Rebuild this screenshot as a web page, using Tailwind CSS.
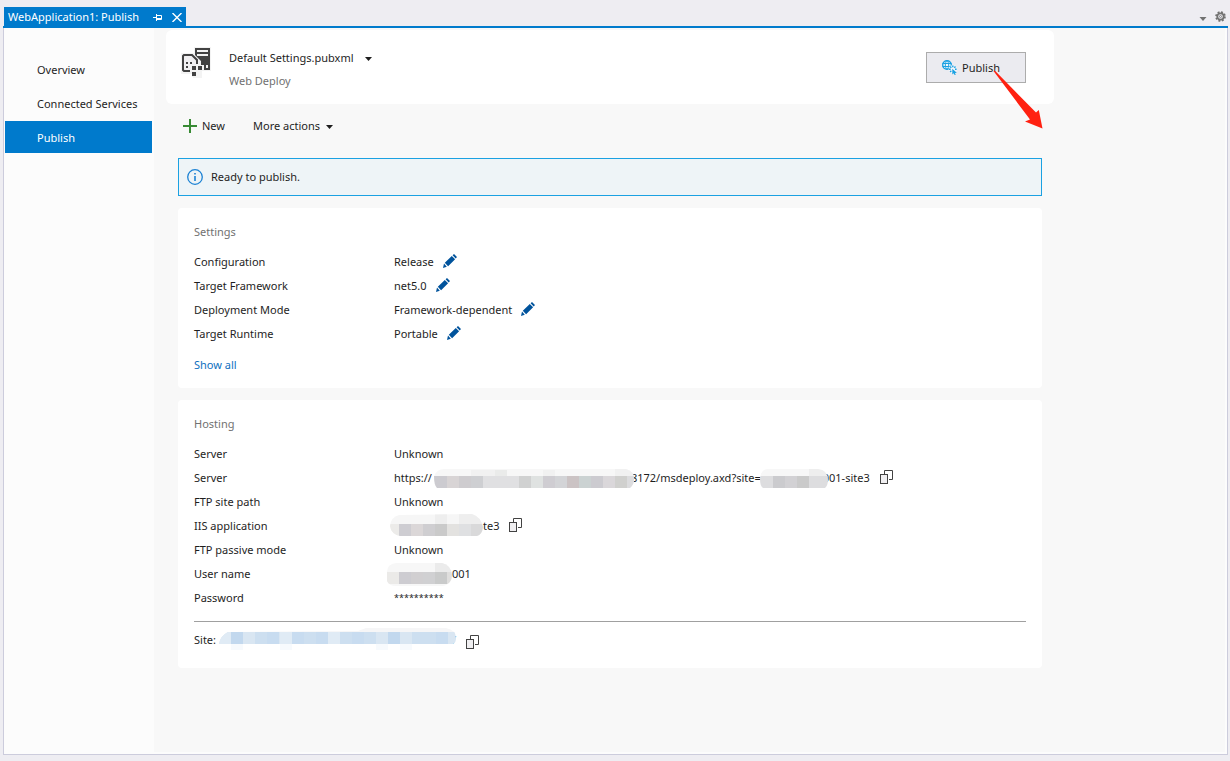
<!DOCTYPE html>
<html lang="en">
<head>
  <meta charset="UTF-8" />
  <meta name="viewport" content="width=device-width, initial-scale=1.0" />
  <title>WebApplication1: Publish</title>
  <script src="https://cdn.jsdelivr.net/npm/@tailwindcss/browser@4"></script>
</head>
<body class="flex min-h-screen flex-col bg-[#eeedf2] pt-[7px] pr-0.5 pb-1.5 pl-[3px] font-['Noto_Sans','Open_Sans',sans-serif] text-[11px] leading-4 text-[#1e1e1e]">

  <!-- shared icons -->
  <svg class="hidden">
    <symbol id="pencil" viewBox="0 0 14 14">
      <path fill="#00539c" d="M0 14l1-4.500L3.800 12.800zM1.800 8.800L8.800 2l3.300 3.300-7 6.900zM9.600 1.300L11 0l3 3-1.300 1.500z" />
    </symbol>
    <symbol id="copy" viewBox="0 0 13 14">
      <path fill="none" stroke="#424242" d="M4.500 4V.5h8v9H9" />
      <rect x=".5" y="4.500" width="7" height="9" fill="#f0eff1" stroke="#424242" />
    </symbol>
    <symbol id="caret" viewBox="0 0 7 4">
      <path fill="currentColor" d="M0 0h7L3.500 4z" />
    </symbol>
  </svg>

  <!-- document tab strip -->
  <header class="flex items-end justify-between border-b-2 border-[#007acc] pl-px">
    <div class="flex h-[19px] items-center bg-[#007acc] px-1 text-white">
      <span class="pt-px">WebApplication1: Publish</span>
      <button class="ml-3.5" aria-label="Pin tab">
        <svg class="mt-0.5 h-[7px] w-[9px]" viewBox="0 0 9 7" fill="none" stroke="#fff"><path d="M0 3.500h3M3.500 0v7M4 1.500h4.500v4H4M4 4.500h4" /></svg>
      </button>
      <button class="ml-2.5" aria-label="Close tab">
        <svg class="mt-0.5 h-[9px] w-[10px]" viewBox="0 0 10 9" fill="none" stroke="#fff" stroke-width="1.400"><path d="M.5 0l9 9M9.500 0l-9 9" /></svg>
      </button>
    </div>
    <div class="flex items-center gap-2 pr-0.5 pb-1 text-[#717171]">
      <button aria-label="Open documents"><svg class="mt-1 h-1 w-2"><use href="#caret" /></svg></button>
      <button aria-label="Window options">
        <svg class="h-[11px] w-[11px]" viewBox="0 0 11 11" fill="none" stroke="#717171"><circle cx="5.500" cy="5.500" r="4.400" stroke-width="1.800" stroke-dasharray="1.900 1.556" /><circle cx="5.500" cy="5.500" r="3.200" stroke-width="1.800" /><circle cx="5.500" cy="5.500" r="1" stroke-width=".8" /></svg>
      </button>
    </div>
  </header>

  <div class="flex grow border border-t-0 border-[#ccccdc] bg-[#fcfcfc] pr-0.5 pb-0.5 pl-px">
    <!-- side navigation -->
    <nav class="flex w-[149px] shrink-0 flex-col gap-0.5 pt-[25px] pr-0.5">
      <a href="#" class="flex h-8 items-center pt-0.5 pl-8">Overview</a>
      <a href="#" class="flex h-8 items-center pt-0.5 pl-8 whitespace-nowrap">Connected Services</a>
      <a href="#" class="flex h-8 items-center bg-[#007acc] pt-0.5 pl-8 text-white">Publish</a>
    </nav>

    <main class="grow bg-[#f8f8f8] pt-0.5 pl-3">
      <div class="max-w-[888px]">
        <!-- profile -->
        <section class="flex h-[74px] items-start rounded-md bg-white pr-7 pl-[15px]">
          <svg class="mt-[17px] h-[31px] w-[30px]" viewBox="0 0 30 31">
            <path fill="#f3f3f3" d="M13 0h17v24H21v7h-9v-4H0V6h13z" />
            <path fill="#424242" d="M14 1h15v22h-9v-9l-6-6z" />
            <path fill="#f3f3f3" d="M16 3h11v2H16zM16 7h11v2H16zM25 18h2v3h-2z" />
            <path fill="#f0eff1" stroke="#424242" stroke-width="2" d="M9 24H3l-1-1V9l1-1h8l5 5v4" />
            <path fill="#424242" d="M5 15h2v2H5zM9 15h2v2H9zM5 19h2v2H5z" />
            <path fill="#f3f3f3" d="M9 18h14v6h-6v6h-6v-6H9z" />
            <path fill="#424242" d="M11 19h4v4h-4zM17 19h4v4h-4zM11 25h4v4h-4z" />
          </svg>
          <div class="mt-5 ml-[18px]">
            <div class="flex items-center gap-[11px]">
              <select aria-label="Publish profile" class="h-4 appearance-none">
                <option>Default Settings.pubxml</option>
              </select>
              <svg class="pointer-events-none mt-0.5 h-1 w-[7px]"><use href="#caret" /></svg>
            </div>
            <p class="mt-[7px] text-[#717171]">Web Deploy</p>
          </div>
          <div class="relative mt-[22px] ml-auto">
            <button class="flex h-[31px] w-[100px] items-center border border-[#acacac] bg-[#ebebf0] pl-[15px]">
              <svg class="h-[15px] w-[15px]" viewBox="0 0 15 15" fill="none" stroke="#1ba1e2">
                <circle cx="5" cy="5" r="4.300" fill="#f4f8fb" stroke-width="1.400" />
                <path d="M.5 3.500h9M.5 6.500h9M5 .5C2.700 3 2.700 7 5 9.500M5 .5c2.300 2.500 2.300 6.500 0 9" />
                <circle cx="10.800" cy="9.300" r="4" fill="#f4f6fa" stroke="none" />
                <path stroke-width="1.400" d="M10.800 5.600v1.700M7 9.300h1.700M8.100 6.600l1.200 1.200M13.500 6.600l-1.200 1.200M8.100 12l1.200-1.200M13 9.300h1.600" />
                <path fill="#1ba1e2" stroke="none" d="M10.300 8.800l4.500 4-1.900.2.900 1.700-1.200.3-.9-1.700-1.400 1.200z" />
              </svg>
              <span class="ml-[5px]">Publish</span>
            </button>
            <!-- pointer arrow -->
            <svg class="pointer-events-none absolute top-[18px] left-[67px] h-[60px] w-[50px]" viewBox="0 0 50 60">
              <path fill="#ff2111" d="M.5 1L2 .8 43 42.500 45.800 40 49.500 58.500 32 51.500 37 49.500z" />
            </svg>
          </div>
        </section>

        <!-- toolbar -->
        <div class="mb-2.5 flex h-11 items-center pl-[17px]">
          <button class="flex items-center gap-[5px]">
            <svg class="h-3.5 w-3.5" viewBox="0 0 14 14"><path fill="#388a34" d="M6 0h2v6h6v2H8v6H6V8H0V6h6z" /></svg>
            New
          </button>
          <button class="ml-7 flex items-center gap-1.5">
            More actions
            <svg class="mt-0.5 h-1 w-[7px]"><use href="#caret" /></svg>
          </button>
        </div>

        <div class="mx-3 flex flex-col gap-3">
          <div role="status" class="flex h-[38px] items-center gap-2 border border-[#1ba1e2] bg-[#eef4f7] pl-2">
            <svg class="h-4 w-4" viewBox="0 0 16 16"><circle cx="8" cy="8" r="7.300" fill="none" stroke="#1c82d4" stroke-width="1.300" /><path fill="#1c82d4" d="M7.200 4h1.600v1.600H7.200zM7.200 7h1.600v5H7.200z" /></svg>
            Ready to publish.
          </div>

          <!-- settings -->
          <section class="rounded bg-white px-4 pt-3 pb-[11px]">
            <h2 class="mb-1.5 leading-6 text-[#717171]">Settings</h2>
            <dl class="grid grid-cols-[200px_1fr] leading-6">
              <dt>Configuration</dt>
              <dd class="flex items-center gap-[9px]">Release <button aria-label="Edit configuration"><svg class="mb-0.5 h-3.5 w-3.5"><use href="#pencil" /></svg></button></dd>
              <dt>Target Framework</dt>
              <dd class="flex items-center gap-[9px]">net5.0 <button aria-label="Edit target framework"><svg class="mb-0.5 h-3.5 w-3.5"><use href="#pencil" /></svg></button></dd>
              <dt>Deployment Mode</dt>
              <dd class="flex items-center gap-[9px]">Framework-dependent <button aria-label="Edit deployment mode"><svg class="mb-0.5 h-3.5 w-3.5"><use href="#pencil" /></svg></button></dd>
              <dt>Target Runtime</dt>
              <dd class="flex items-center gap-[9px]">Portable <button aria-label="Edit target runtime"><svg class="mb-0.5 h-3.5 w-3.5"><use href="#pencil" /></svg></button></dd>
            </dl>
            <a href="#" class="mt-[7px] block leading-6 text-[#0e70c0]">Show all</a>
          </section>

          <!-- hosting -->
          <section class="rounded bg-white px-4 pt-3 pb-4">
            <h2 class="mb-1.5 leading-6 text-[#717171]">Hosting</h2>
            <dl class="grid grid-cols-[200px_1fr] leading-6">
              <dt>Server</dt>
              <dd>Unknown</dd>
              <dt>Server</dt>
              <dd class="flex items-center">
                <span class="whitespace-nowrap">https://</span>
                <svg class="relative ml-0.5 h-6 w-[200px]" viewBox="0 0 200 24">
                  <clipPath id="maskHost"><path d="M0 10q3-7 10-7h182q8 2 8 10 0 6-4 9H3q-3-3-3-12z" /></clipPath>
                  <g clip-path="url(#maskHost)">
                    <path fill="#f7f7f7" d="M0 3h200v19H0z" />
                    <path fill="#f1f1f1" d="M37 4h24v6H37zM181 3h19v7h-19z" /><path fill="#eaebea" d="M61 4h12v6H61z" /><path fill="#f1f1f1" d="M109 4h12v6h-12z" />
                    <path fill="#cccbd0" d="M0 10h13v12H0z" /><path fill="#d8d4d5" d="M13 10h12v12H13z" /><path fill="#cecccf" d="M25 10h12v12H25z" /><path fill="#cecfd2" d="M37 10h12v12H37z" />
                    <path fill="#e0e0e2" d="M49 10h36v12H49z" /><path fill="#d0d1d1" d="M85 10h12v12H85z" /><path fill="#dfe2e1" d="M97 10h12v12H97z" /><path fill="#cfcdd2" d="M109 10h12v12h-12z" />
                    <path fill="#d3d4d7" d="M121 10h12v12h-12z" /><path fill="#cbc3c4" d="M133 10h12v12h-12z" /><path fill="#cbd2d2" d="M145 10h12v12h-12z" /><path fill="#cccbd0" d="M157 10h12v12h-12z" />
                    <path fill="#dad7da" d="M169 10h12v12h-12z" /><path fill="#d0d0ce" d="M181 10h12v12h-12z" /><path fill="#dcdcde" d="M193 10h7v12h-7z" />
                  </g>
                </svg>
                <span class="-ml-[3px] whitespace-nowrap">8172/msdeploy.axd?site=</span>
                <svg class="relative -ml-px h-6 w-[68px]" viewBox="0 0 68 24">
                  <clipPath id="maskSite"><path d="M0 13q1-10 8-10h50q10 1 10 11 0 5-3 8H3q-3-2-3-9z" /></clipPath>
                  <g clip-path="url(#maskSite)">
                    <path fill="#f7f7f7" d="M0 3h49v7H0z" /><path fill="#eeeeee" d="M49 3h19v7H49z" />
                    <path fill="#dddddf" d="M0 10h13v12H0z" /><path fill="#cbcbce" d="M13 10h12v12H13z" /><path fill="#d2d1d4" d="M25 10h12v12H25z" /><path fill="#cacaca" d="M37 10h12v12H37z" /><path fill="#dddddf" d="M49 10h19v12H49z" />
                  </g>
                </svg>
                <span class="-ml-[5px] whitespace-nowrap">001-site3</span>
                <button class="ml-2.5" aria-label="Copy server"><svg class="mb-0.5 h-3.5 w-[13px]"><use href="#copy" /></svg></button>
              </dd>
              <dt>FTP site path</dt>
              <dd>Unknown</dd>
              <dt>IIS application</dt>
              <dd class="flex items-center">
                <svg class="-ml-1 h-6 w-[93px]" viewBox="0 0 93 24">
                  <clipPath id="maskApp"><path d="M0 12q1-9 9-11L82 0q9 3 11 13-1 8-6 9H10Q1 20 0 12z" /></clipPath>
                  <g clip-path="url(#maskApp)">
                    <path fill="#f6f6f6" d="M0 0h93v24H0z" /><path fill="#eeeeee" d="M45 0h12v10H45zM69 0h24v10H69z" />
                    <path fill="#ecebe9" d="M0 10h9v12H0z" /><path fill="#cecdd2" d="M9 10h12v12H9z" /><path fill="#dbd7d8" d="M21 10h12v12H21z" /><path fill="#cfced1" d="M33 10h12v12H33z" />
                    <path fill="#cacaca" d="M45 10h12v12H45z" /><path fill="#e3e2e0" d="M57 10h12v12H57z" /><path fill="#dfe0e2" d="M69 10h12v12H69z" /><path fill="#d9d9da" d="M81 10h12v12H81z" />
                  </g>
                </svg>
                te3
                <button class="ml-2.5" aria-label="Copy IIS application"><svg class="mb-0.5 h-3.5 w-[13px]"><use href="#copy" /></svg></button>
              </dd>
              <dt>FTP passive mode</dt>
              <dd>Unknown</dd>
              <dt>User name</dt>
              <dd class="flex items-center">
                <svg class="-ml-[7px] h-6 w-[65px]" viewBox="0 0 65 24">
                  <clipPath id="maskUser"><path d="M0 10q0-8 9-9h46q9 2 10 12 0 9-9 11H9q-7 0-9-5z" /></clipPath>
                  <g clip-path="url(#maskUser)">
                    <path fill="#f7f7f7" d="M0 0h65v24H0z" /><path fill="#ebebeb" d="M48 0h17v10H48z" />
                    <path fill="#ebeae8" d="M0 10h12v12H0z" /><path fill="#cdccd1" d="M12 10h12v12H12z" /><path fill="#d1cfd1" d="M24 10h12v12H24z" /><path fill="#d0d0d2" d="M36 10h12v12H36z" /><path fill="#c9caca" d="M48 10h12v12H48z" /><path fill="#dfdedd" d="M60 10h5v12h-5z" />
                  </g>
                </svg>
                001
              </dd>
              <dt>Password</dt>
              <dd class="text-[9px]">**********</dd>
            </dl>
            <hr class="mt-[11px] mb-1.5 border-[#a0a0a0]" />
            <div class="flex h-6 items-center">
              Site:
              <a href="#" class="ml-[3px] flex items-center text-[#0e70c0]" aria-label="Site address">
                <svg class="relative h-7 w-[237px]" viewBox="0 0 237 28">
                  <clipPath id="maskUrl"><path d="M0 18q1-8 9-12l130-1 8-3h80q10 2 10 10 0 5-3 6H226v6H12v-6z" /></clipPath>
                  <g clip-path="url(#maskUrl)">
                    <path fill="#f6f6f7" d="M0 0h237v7H0z" />
                    <path fill="#f7fafd" d="M12 18h12v10H12zM61 18h12v10H61zM157 18h12v7h-12zM181 18h12v7h-12z" />
                    <path fill="#d9e6f2" d="M0 6h237v12H0z" /><path fill="#c2d8ee" d="M12 6h12v12H12zM169 6h12v12h-12z" /><path fill="#c8dcf0" d="M48 6h12v12H48zM73 6h12v12H73zM97 6h12v12H97zM133 6h12v12h-12zM217 6h12v12h-12z" />
                    <path fill="#cddff0" d="M36 6h12v12H36zM85 6h12v12H85zM121 6h12v12h-12zM145 6h12v12h-12zM193 6h24v12h-24z" /><path fill="#e0ebf5" d="M0 6h12v12H0zM109 6h12v12h-12zM61 6h12v12H61z" />
                  </g>
                </svg>
                <span class="-ml-1">/</span>
              </a>
              <button class="mt-1 ml-2.5" aria-label="Copy site"><svg class="h-3.5 w-[13px]"><use href="#copy" /></svg></button>
            </div>
          </section>
        </div>
      </div>
    </main>
  </div>
</body>
</html>
